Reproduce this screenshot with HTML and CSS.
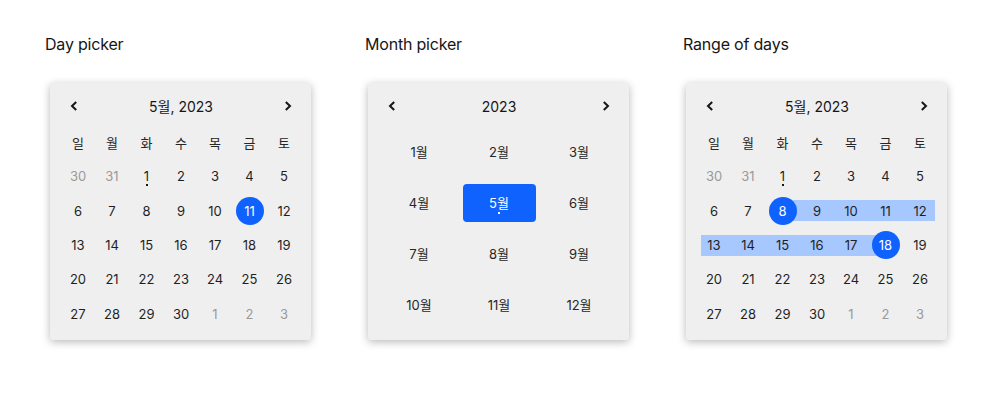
FILE: index.html
```html
<!DOCTYPE html>
<html lang="ko">
<head>
<meta charset="utf-8">
<title>Date pickers</title>
<link rel="stylesheet" href="styles.css">
</head>
<body>
<div class="page">
  <section class="col">
    <h2 class="title">Day picker</h2>
    <div class="card">
      <div class="head">
        <button class="nav"><svg width="8" height="10" viewBox="0 0 8 10"><path d="M6.2 1 L2 5 L6.2 9" fill="none" stroke="#161616" stroke-width="2"/></svg></button>
        <span class="label">5월, 2023</span>
        <button class="nav"><svg width="8" height="10" viewBox="0 0 8 10"><path d="M1.8 1 L6 5 L1.8 9" fill="none" stroke="#161616" stroke-width="2"/></svg></button>
      </div>
      <div class="days">
        <span class="wd">일</span><span class="wd">월</span><span class="wd">화</span><span class="wd">수</span><span class="wd">목</span><span class="wd">금</span><span class="wd">토</span>
        <span class="d out">30</span><span class="d out">31</span><span class="d today">1</span><span class="d">2</span><span class="d">3</span><span class="d">4</span><span class="d">5</span>
        <span class="d">6</span><span class="d">7</span><span class="d">8</span><span class="d">9</span><span class="d">10</span><span class="d"><b class="sel">11</b></span><span class="d">12</span>
        <span class="d">13</span><span class="d">14</span><span class="d">15</span><span class="d">16</span><span class="d">17</span><span class="d">18</span><span class="d">19</span>
        <span class="d">20</span><span class="d">21</span><span class="d">22</span><span class="d">23</span><span class="d">24</span><span class="d">25</span><span class="d">26</span>
        <span class="d">27</span><span class="d">28</span><span class="d">29</span><span class="d">30</span><span class="d out">1</span><span class="d out">2</span><span class="d out">3</span>
      </div>
    </div>
  </section>

  <section class="col">
    <h2 class="title shifted">Month picker</h2>
    <div class="card">
      <div class="head">
        <button class="nav"><svg width="8" height="10" viewBox="0 0 8 10"><path d="M6.2 1 L2 5 L6.2 9" fill="none" stroke="#161616" stroke-width="2"/></svg></button>
        <span class="label">2023</span>
        <button class="nav"><svg width="8" height="10" viewBox="0 0 8 10"><path d="M1.8 1 L6 5 L1.8 9" fill="none" stroke="#161616" stroke-width="2"/></svg></button>
      </div>
      <div class="months">
        <span class="m"><b>1월</b></span><span class="m"><b>2월</b></span><span class="m"><b>3월</b></span>
        <span class="m"><b>4월</b></span><span class="m"><b class="msel">5월</b></span><span class="m"><b>6월</b></span>
        <span class="m"><b>7월</b></span><span class="m"><b>8월</b></span><span class="m"><b>9월</b></span>
        <span class="m"><b>10월</b></span><span class="m"><b>11월</b></span><span class="m"><b>12월</b></span>
      </div>
    </div>
  </section>

  <section class="col">
    <h2 class="title shifted">Range of days</h2>
    <div class="card">
      <div class="head">
        <button class="nav"><svg width="8" height="10" viewBox="0 0 8 10"><path d="M6.2 1 L2 5 L6.2 9" fill="none" stroke="#161616" stroke-width="2"/></svg></button>
        <span class="label">5월, 2023</span>
        <button class="nav"><svg width="8" height="10" viewBox="0 0 8 10"><path d="M1.8 1 L6 5 L1.8 9" fill="none" stroke="#161616" stroke-width="2"/></svg></button>
      </div>
      <div class="days">
        <span class="wd">일</span><span class="wd">월</span><span class="wd">화</span><span class="wd">수</span><span class="wd">목</span><span class="wd">금</span><span class="wd">토</span>
        <span class="d out">30</span><span class="d out">31</span><span class="d today">1</span><span class="d">2</span><span class="d">3</span><span class="d">4</span><span class="d">5</span>
        <span class="d">6</span><span class="d">7</span><span class="d start"><b class="sel">8</b></span><span class="d in">9</span><span class="d in">10</span><span class="d in">11</span><span class="d in row-end">12</span>
        <span class="d in row-start">13</span><span class="d in">14</span><span class="d in">15</span><span class="d in">16</span><span class="d in">17</span><span class="d end"><b class="sel">18</b></span><span class="d">19</span>
        <span class="d">20</span><span class="d">21</span><span class="d">22</span><span class="d">23</span><span class="d">24</span><span class="d">25</span><span class="d">26</span>
        <span class="d">27</span><span class="d">28</span><span class="d">29</span><span class="d">30</span><span class="d out">1</span><span class="d out">2</span><span class="d out">3</span>
      </div>
    </div>
  </section>
</div>
</body>
</html>
```

FILE: styles.css
```css
* { box-sizing: border-box; }

html, body {
  margin: 0;
  padding: 0;
  background: #ffffff;
}

body {
  font-family: "Inter", "Noto Sans CJK KR", sans-serif;
  color: #161616;
  width: 1000px;
  height: 401px;
  overflow: hidden;
}

.page {
  display: flex;
  padding: 34px 0 0 45px;
  gap: 57px;
}

.col {
  width: 261px;
  display: flex;
  flex-direction: column;
}

.title {
  margin: 0 0 29px 0;
  font-size: 16px;
  line-height: 20px;
  font-weight: 400;
  color: #161616;
  letter-spacing: -0.2px;
}

.title.shifted {
  padding-left: 2px;
}

.card {
  margin-left: 5px;
  width: 261px;
  height: 257px;
  background: #efefef;
  border-radius: 3px;
  box-shadow: 0 2px 8px rgba(0, 0, 0, 0.28);
  padding: 7px 10px 10px 11px;
}

.head {
  height: 32px;
  display: flex;
  align-items: center;
  justify-content: space-between;
}

.nav {
  width: 26px;
  height: 32px;
  border: 0;
  padding: 0;
  background: none;
  display: flex;
  align-items: center;
  justify-content: center;
}

.label {
  font-size: 14px;
  color: #161616;
}

.days {
  margin-top: 3px;
  display: grid;
  grid-template-columns: 34px 34px 35px 34px 34px 35px 34px;
  grid-auto-rows: 34.33px;
}

.wd, .d {
  display: flex;
  align-items: center;
  justify-content: center;
  font-size: 13px;
  color: #1f1f1f;
}

.wd {
  font-size: 13px;
  color: #262626;
}

.d.out { color: #9a9a9a; }

.d.today { position: relative; }
.d.today::after {
  content: "";
  position: absolute;
  left: 50%;
  top: 25px;
  width: 2px;
  height: 2px;
  margin-left: -1px;
  background: #161616;
}

.sel {
  font-weight: 400;
  width: 28px;
  height: 28px;
  border-radius: 50%;
  background: #0f62fe;
  color: #ffffff;
  display: flex;
  align-items: center;
  justify-content: center;
}

.d.in {
  background: linear-gradient(#a6c8ff, #a6c8ff) center / 100% 21px no-repeat;
}
.d.in.row-start {
  background: linear-gradient(#a6c8ff, #a6c8ff) right center / calc(100% - 4px) 21px no-repeat;
}
.d.in.row-end {
  background: linear-gradient(#a6c8ff, #a6c8ff) left center / calc(100% - 2px) 21px no-repeat;
}
.d.start {
  background: linear-gradient(#a6c8ff, #a6c8ff) right center / 50% 21px no-repeat;
}
.d.end {
  background: linear-gradient(#a6c8ff, #a6c8ff) left center / 50% 21px no-repeat;
}

.months {
  margin-top: 4px;
  display: grid;
  grid-template-columns: repeat(3, 80px);
  grid-auto-rows: 51px;
}

.m {
  display: flex;
  align-items: center;
  justify-content: center;
}

.m b {
  font-weight: 400;
  font-size: 13px;
  color: #262626;
  width: 73px;
  height: 38px;
  display: flex;
  align-items: center;
  justify-content: center;
  border-radius: 4px;
}

.m b.msel {
  background: #0f62fe;
  color: #ffffff;
  position: relative;
}
.m b.msel::after {
  content: "";
  position: absolute;
  left: 50%;
  top: 28px;
  width: 2px;
  height: 2px;
  margin-left: -1px;
  background: #ffffff;
}
```
